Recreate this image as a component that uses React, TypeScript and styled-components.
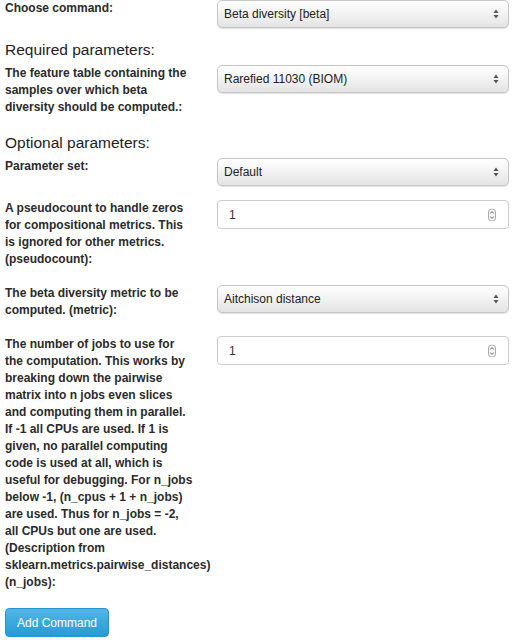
import React from "react";
import styled, { createGlobalStyle } from "styled-components";

const GlobalStyle = createGlobalStyle`
  html, body { margin: 0; padding: 0; background: #ffffff; }
  body { font-family: "Liberation Sans", Arial, Helvetica, sans-serif; color: #333333; }
  * { box-sizing: border-box; }
`;

const Page = styled.div`
  width: 522px;
  padding: 0 13px 0 5px;
`;

const Row = styled.div<{ $gap?: number }>`
  display: grid;
  grid-template-columns: 212px 292px;
  align-items: start;
  margin-bottom: ${(p) => p.$gap ?? 12}px;
`;

const Label = styled.label`
  display: block;
  width: 188px;
  font-size: 12px;
  line-height: 17px;
  font-weight: bold;
  color: #2b2b2b;
  padding-bottom: 5px;
  white-space: normal;
`;

const Heading = styled.h4`
  margin: 0 0 6px 0;
  font-size: 15.5px;
  line-height: 19px;
  font-weight: normal;
  color: #222222;
`;

const SelectBox = styled.div`
  position: relative;
  height: 28px;
  display: flex;
  align-items: center;
  padding: 0 26px 0 6px;
  border: 1px solid #c6c6c6;
  border-radius: 5px;
  background: linear-gradient(#ffffff 0%, #f3f3f3 45%, #e4e4e4 100%);
  box-shadow: 0 1px 1px rgba(0, 0, 0, 0.12);
  font-size: 12px;
  color: #222222;
`;

const InputBox = styled.div`
  position: relative;
  height: 29px;
  display: flex;
  align-items: center;
  padding: 0 26px 0 11px;
  border: 1px solid #cccccc;
  border-radius: 4px;
  background: #ffffff;
  font-size: 12px;
  color: #333333;
`;

const Arrows = styled.svg`
  position: absolute;
  right: 9px;
  top: 50%;
  transform: translateY(-50%);
`;

const Spinner = styled.svg`
  position: absolute;
  right: 12px;
  top: 50%;
  transform: translateY(-50%);
`;

const ButtonRow = styled.div`
  margin-top: 0;
`;

const Button = styled.button`
  height: 29px;
  padding: 0 11px;
  border: 1px solid #1f95d2;
  border-radius: 4px;
  background: linear-gradient(#55b6e6 0%, #35a6dc 60%, #269bd4 100%);
  color: #ffffff;
  font-family: "Liberation Sans", Arial, sans-serif;
  font-size: 12px;
  cursor: pointer;
`;

const SelectArrows = () => (
  <Arrows width="6" height="10" viewBox="0 0 6 10">
    <path d="M3 0.5 L5.5 4 L0.5 4 Z" fill="#555" />
    <path d="M3 9.5 L5.5 6 L0.5 6 Z" fill="#555" />
  </Arrows>
);

const NumberSpinner = () => (
  <Spinner width="8" height="13" viewBox="0 0 8 13">
    <rect x="0.5" y="0.5" width="7" height="12" rx="3" fill="#f8f8f8" stroke="#aaa" />
    <path d="M2.3 5 L4 3 L5.7 5" fill="none" stroke="#555" strokeWidth="0.9" />
    <path d="M2.3 8 L4 10 L5.7 8" fill="none" stroke="#555" strokeWidth="0.9" />
  </Spinner>
);

const Select = ({ value }: { value: string }) => (
  <SelectBox>
    {value}
    <SelectArrows />
  </SelectBox>
);

const NumberInput = ({ value }: { value: string }) => (
  <InputBox>
    {value}
    <NumberSpinner />
  </InputBox>
);

export default function App() {
  return (
    <Page>
      <GlobalStyle />
      <Row>
        <Label>Choose command:</Label>
        <Select value="Beta diversity [beta]" />
      </Row>
      <Heading>Required parameters:</Heading>
      <Row>
        <Label>The feature table containing the samples over which beta diversity should be computed.:</Label>
        <Select value="Rarefied 11030 (BIOM)" />
      </Row>
      <Heading>Optional parameters:</Heading>
      <Row $gap={14}>
        <Label>Parameter set:</Label>
        <Select value="Default" />
      </Row>
      <Row>
        <Label>A pseudocount to handle zeros for compositional metrics. This is ignored for other metrics. (pseudocount):</Label>
        <NumberInput value="1" />
      </Row>
      <Row>
        <Label>The beta diversity metric to be computed. (metric):</Label>
        <Select value="Aitchison distance" />
      </Row>
      <Row>
        <Label>
          The number of jobs to use for the computation. This works by breaking down the pairwise matrix into n jobs even slices and computing them in parallel. If -1 all CPUs are used. If 1 is given, no parallel computing code is used at all, which is useful for debugging. For n_jobs below -1, (n_cpus + 1 + n_jobs) are used. Thus for n_jobs = -2, all CPUs but one are used. (Description from sklearn.metrics.pairwise_distances) (n_jobs):
        </Label>
        <NumberInput value="1" />
      </Row>
      <ButtonRow>
        <Button>Add Command</Button>
      </ButtonRow>
    </Page>
  );
}
